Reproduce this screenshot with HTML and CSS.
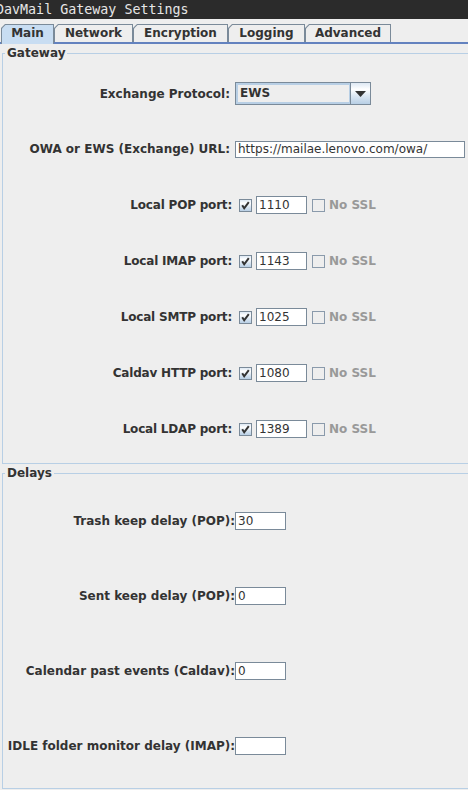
FILE: index.html
```html
<!DOCTYPE html>
<html>
<head>
<meta charset="utf-8">
<link rel="stylesheet" href="styles.css">
</head>
<body>
<div class="window">
  <div class="titlebar">DavMail Gateway Settings</div>
  <div class="tabstrip">
    <div class="tab selected t-main"><span>Main</span></div>
    <div class="tab t-network"><span>Network</span></div>
    <div class="tab t-encryption"><span>Encryption</span></div>
    <div class="tab t-logging"><span>Logging</span></div>
    <div class="tab t-advanced"><span>Advanced</span></div>
  </div>
  <div class="content">
    <fieldset class="group gateway">
      <legend>Gateway</legend>
      <div class="row first">
        <label class="lbl">Exchange Protocol:</label>
        <div class="combo">
          <div class="combo-value">EWS</div>
          <div class="combo-btn"><svg width="11" height="6" viewBox="0 0 11 6"><path d="M0 0H11L5.5 6Z" fill="#333"/></svg></div>
        </div>
      </div>
      <div class="row">
        <label class="lbl">OWA or EWS (Exchange) URL:</label>
        <div class="field url">https://mailae.lenovo.com/owa/</div>
      </div>
      <div class="row portrow">
        <label class="lbl">Local POP port:</label>
        <div class="port">
          <span class="check on"><svg width="13" height="13" viewBox="0 0 13 13"><path d="M3.2 6.2L5.2 9.3L9.8 3.2" fill="none" stroke="#333" stroke-width="2"/></svg></span>
          <div class="field small">1110</div>
          <span class="check off"></span><span class="nossl">No SSL</span>
        </div>
      </div>
      <div class="row portrow">
        <label class="lbl">Local IMAP port:</label>
        <div class="port">
          <span class="check on"><svg width="13" height="13" viewBox="0 0 13 13"><path d="M3.2 6.2L5.2 9.3L9.8 3.2" fill="none" stroke="#333" stroke-width="2"/></svg></span>
          <div class="field small">1143</div>
          <span class="check off"></span><span class="nossl">No SSL</span>
        </div>
      </div>
      <div class="row portrow">
        <label class="lbl">Local SMTP port:</label>
        <div class="port">
          <span class="check on"><svg width="13" height="13" viewBox="0 0 13 13"><path d="M3.2 6.2L5.2 9.3L9.8 3.2" fill="none" stroke="#333" stroke-width="2"/></svg></span>
          <div class="field small">1025</div>
          <span class="check off"></span><span class="nossl">No SSL</span>
        </div>
      </div>
      <div class="row portrow">
        <label class="lbl">Caldav HTTP port:</label>
        <div class="port">
          <span class="check on"><svg width="13" height="13" viewBox="0 0 13 13"><path d="M3.2 6.2L5.2 9.3L9.8 3.2" fill="none" stroke="#333" stroke-width="2"/></svg></span>
          <div class="field small">1080</div>
          <span class="check off"></span><span class="nossl">No SSL</span>
        </div>
      </div>
      <div class="row portrow">
        <label class="lbl">Local LDAP port:</label>
        <div class="port">
          <span class="check on"><svg width="13" height="13" viewBox="0 0 13 13"><path d="M3.2 6.2L5.2 9.3L9.8 3.2" fill="none" stroke="#333" stroke-width="2"/></svg></span>
          <div class="field small">1389</div>
          <span class="check off"></span><span class="nossl">No SSL</span>
        </div>
      </div>
    </fieldset>
    <fieldset class="group delays">
      <legend>Delays</legend>
      <div class="drow">
        <label class="dlbl">Trash keep delay (POP):</label>
        <div class="field small">30</div>
      </div>
      <div class="drow">
        <label class="dlbl">Sent keep delay (POP):</label>
        <div class="field small">0</div>
      </div>
      <div class="drow">
        <label class="dlbl">Calendar past events (Caldav):</label>
        <div class="field small">0</div>
      </div>
      <div class="drow">
        <label class="dlbl">IDLE folder monitor delay (IMAP):</label>
        <div class="field small"></div>
      </div>
    </fieldset>
  </div>
</div>
</body>
</html>
```
FILE: styles.css
```css
html, body {
  margin: 0;
  padding: 0;
  background: #eeeeee;
  overflow: hidden;
}
.window {
  width: 480px;
  height: 790px;
  background: #eeeeee;
  font-family: "DejaVu Sans", sans-serif;
  font-size: 12px;
  color: #333333;
}
.titlebar {
  height: 19px;
  line-height: 19px;
  background: #2b2b2b;
  color: #e6e6e6;
  font-family: "DejaVu Sans Mono", monospace;
  font-size: 13.33px;
  white-space: nowrap;
  text-indent: -4px;
}
.tabstrip {
  display: flex;
  align-items: flex-end;
  padding-left: 1px;
  border-bottom: 2px solid #6382bf;
  box-sizing: border-box;
  height: 25px;
}
.tab {
  background: #7a8a99;
  clip-path: polygon(4px 0, 100% 0, 100% 100%, 0 100%, 0 4px);
  padding: 1px 1px 0 1px;
  box-sizing: border-box;
}
.t-main { width: 53px; }
.t-network { width: 79px; }
.t-encryption { width: 95px; }
.t-logging { width: 77px; }
.t-advanced { width: 86px; }
.tab span {
  display: block;
  height: 17px;
  line-height: 17px;
  text-align: center;
  background: #eeeeee;
  font-weight: bold;
  white-space: nowrap;
  clip-path: polygon(3.5px 0, 100% 0, 100% 100%, 0 100%, 0 3.5px);
  box-sizing: border-box;
}
.tab.selected {
  margin-bottom: -2px;
}
.tab.selected span {
  height: 19px;
  background: #c8ddf2;
}
.content {
  padding: 2px 0 0 2px;
}
.group {
  margin: 0;
  border: 1px solid #b8cfe5;
  padding: 0 0 0 2px;
  min-width: 0;
}
.group legend {
  padding: 0 2px;
  font-weight: bold;
  line-height: 14px;
  font-size: 12px;
}
.gateway {
  padding-top: 6px;
  padding-bottom: 6px;
}
.row {
  display: grid;
  grid-template-columns: 225px auto;
  column-gap: 5px;
  align-items: center;
  height: 56px;
}
.row.first {
  height: 55px;
}
.lbl, .dlbl {
  font-weight: bold;
  text-align: right;
  white-space: nowrap;
}
.portrow .lbl {
  letter-spacing: -0.2px;
  margin-right: -2px;
}
.combo {
  display: flex;
  width: 136px;
  height: 23px;
  border: 1px solid #7a8a99;
  box-sizing: border-box;
}
.combo-value {
  flex: 1;
  border: 2px solid #b8cfe5;
  border-right-width: 1px;
  font-weight: bold;
  line-height: 17px;
  padding-left: 2px;
  background: #eeeeee;
}
.combo-btn {
  width: 19px;
  border-left: 1px solid #7a8a99;
  background: linear-gradient(#dde8f3 0%, #ffffff 30%, #dde8f3 60%, #b8cfe5 100%);
  display: flex;
  align-items: center;
  justify-content: center;
}
.field {
  background: #ffffff;
  border: 1px solid #7a8a99;
  box-sizing: border-box;
  height: 18px;
  line-height: 16px;
  padding-left: 2px;
  white-space: nowrap;
  overflow: hidden;
}
.field.url {
  width: 230px;
  height: 17px;
  line-height: 15px;
}
.field.small {
  width: 51px;
}
.port {
  display: flex;
  align-items: center;
}
.check {
  display: block;
  width: 13px;
  height: 13px;
  box-sizing: border-box;
  border: 1px solid #7a8a99;
}
.check svg {
  display: block;
  margin: -1px;
}
.check.on {
  margin-left: 4px;
  margin-right: 4px;
  background: linear-gradient(#dde8f3 0%, #ffffff 30%, #dde8f3 60%, #b8cfe5 100%);
}
.check.off {
  margin-left: 5px;
  margin-right: 4px;
  border-color: #8a9aab;
  background: #eeeeee;
}
.nossl {
  font-weight: bold;
  color: #999999;
}
.delays {
  margin-top: 2px;
  padding-top: 3px;
  padding-bottom: 5px;
}
.drow {
  display: grid;
  grid-template-columns: 230px auto;
  align-items: center;
  height: 75px;
}
```
